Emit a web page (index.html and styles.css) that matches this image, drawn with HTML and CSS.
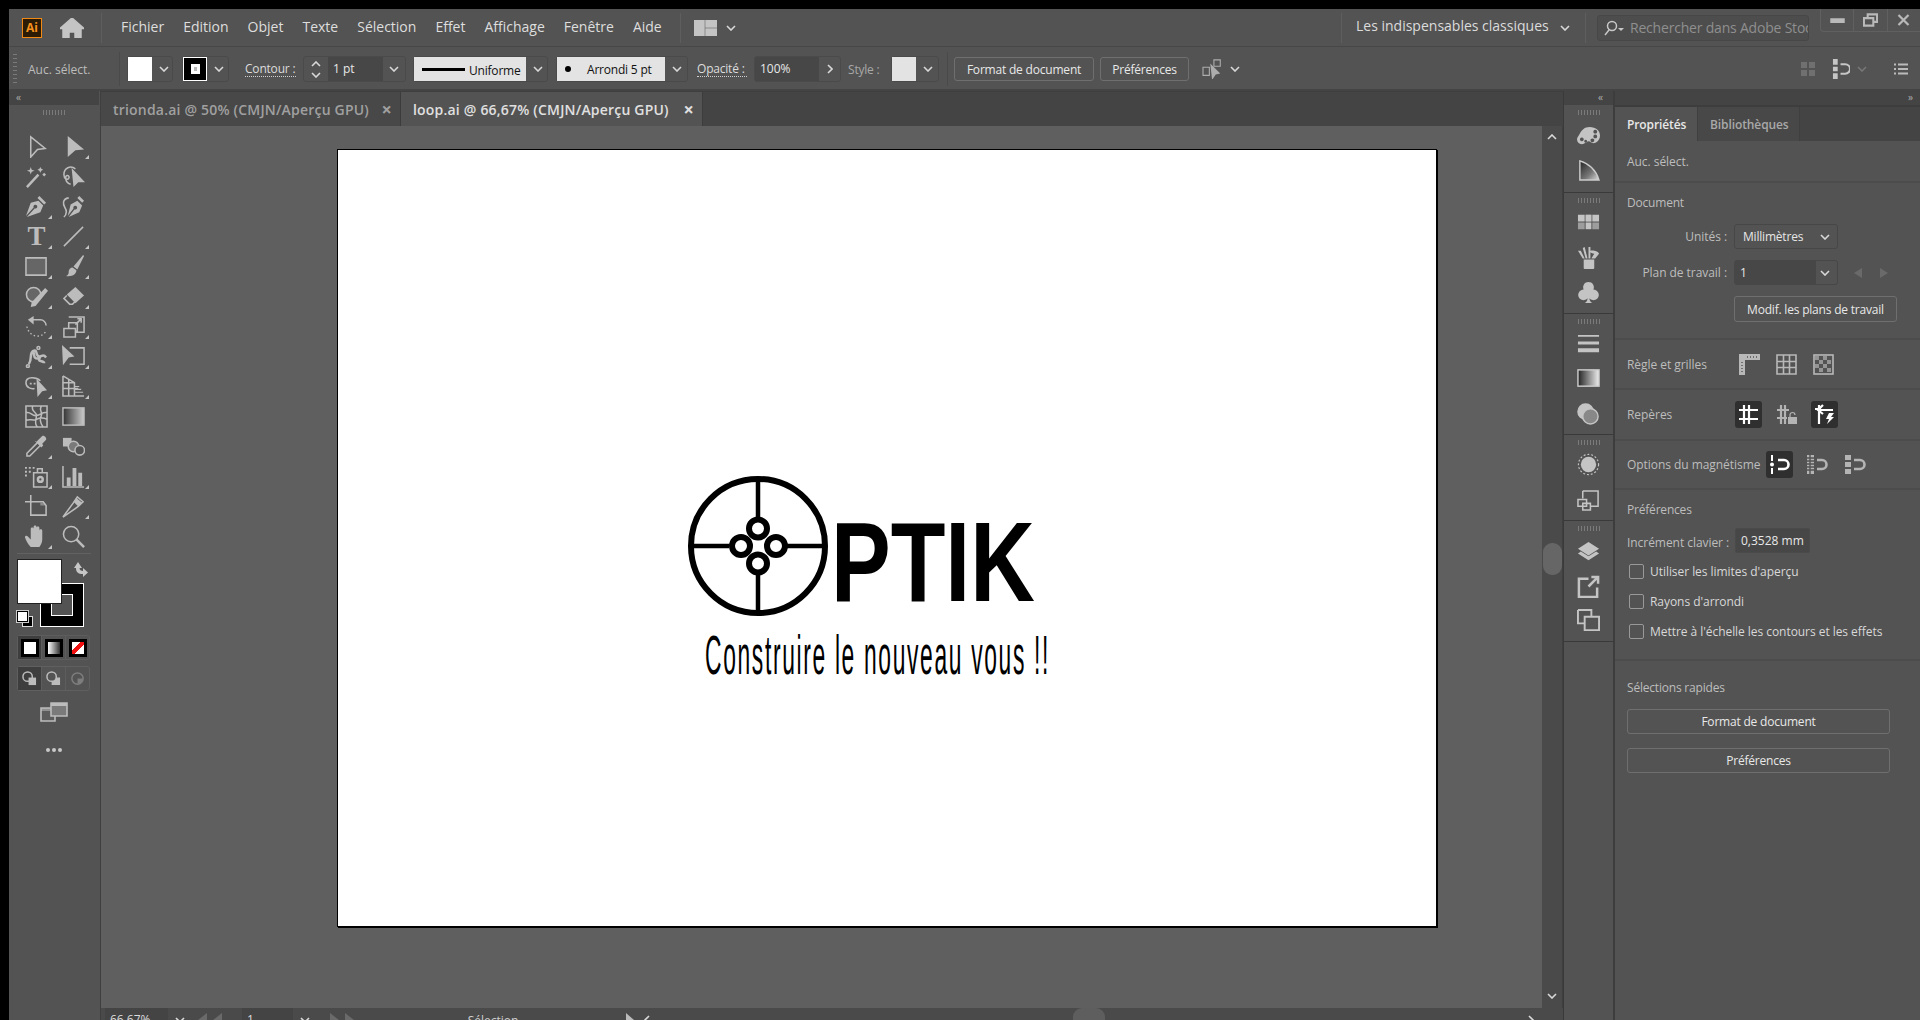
FILE: index.html
```html
<!DOCTYPE html>
<html lang="fr">
<head>
<meta charset="utf-8">
<title>Adobe Illustrator - loop.ai</title>
<link rel="stylesheet" href="styles.css">
</head>
<body>
<div class="app">
  <header class="menubar">
    <div class="ailogo">Ai</div>
    <svg class="home" viewBox="0 0 24 20"><path class="f" d="M12 0 24 10.5h-3V20h-6v-6H9v6H3v-9.500H0z"/></svg>
    <div class="vsep vs-home"></div>
    <nav class="menus"><span>Fichier</span><span>Edition</span><span>Objet</span><span>Texte</span><span>Sélection</span><span>Effet</span><span>Affichage</span><span>Fenêtre</span><span>Aide</span></nav>
    <div class="vsep"></div>
    <svg class="wsicon" viewBox="0 0 23 16"><path class="f" d="M0 0h10v16H0zM12 0h11v7H12zM12 9h11v7H12z"/></svg>
    <svg class="chev" viewBox="0 0 10 6"><path d="M1 1l4 4 4-4"/></svg>
    <div class="grow"></div>
    <div class="vsep"></div>
    <span class="wsname">Les indispensables classiques</span>
    <svg class="chev wschev" viewBox="0 0 10 6"><path d="M1 1l4 4 4-4"/></svg>
    <div class="vsep vs-search"></div>
    <div class="search">
      <svg viewBox="0 0 22 16"><circle cx="9" cy="6" r="4.500"/><path d="M6 10l-4 5"/><path class="f nostroke" d="M15 8h6l-3 3z"/></svg>
      <span>Rechercher dans Adobe Stoc</span>
    </div>
    <div class="winctl">
      <div><svg viewBox="0 0 14 12"><path class="f" d="M1 5h12v3H1z"/></svg></div>
      <div><svg viewBox="0 0 16 14"><path class="thick" d="M5 4V1h10v8h-4M1 5h10v8H1z"/></svg></div>
      <div><svg viewBox="0 0 14 14"><path class="thick" d="M2 2l10 10M12 2 2 12"/></svg></div>
    </div>
  </header>

  <div class="ctrlbar">
    <div class="grip"></div>
    <span class="lbl aucsel">Auc. sélect.</span>
    <div class="vsep vs-ctrl"></div>
    <div class="box swbox"><div class="swatch"></div><svg class="chev" viewBox="0 0 10 6"><path d="M1 1l4 4 4-4"/></svg></div>
    <div class="box swbox2"><div class="swatch strokesw"><i></i></div><svg class="chev" viewBox="0 0 10 6"><path d="M1 1l4 4 4-4"/></svg></div>
    <span class="lbl dotted contour">Contour :</span>
    <div class="box stepper">
      <div class="steps"><svg class="chev" viewBox="0 0 10 6"><path d="M1 5l4-4 4 4"/></svg><svg class="chev" viewBox="0 0 10 6"><path d="M1 1l4 4 4-4"/></svg></div>
      <div class="field fd-pt">1 pt</div>
      <svg class="chev" viewBox="0 0 10 6"><path d="M1 1l4 4 4-4"/></svg>
    </div>
    <div class="box profile"><div class="lightpart lp1"><i class="strokeline"></i><span>Uniforme</span></div><svg class="chev" viewBox="0 0 10 6"><path d="M1 1l4 4 4-4"/></svg></div>
    <div class="box brush"><div class="lightpart lp2"><i class="dot"></i><span>Arrondi 5 pt</span></div><svg class="chev" viewBox="0 0 10 6"><path d="M1 1l4 4 4-4"/></svg></div>
    <span class="lbl dotted opac">Opacité :</span>
    <div class="box opbox"><div class="field fd-op">100%</div><svg class="chevr" viewBox="0 0 6 10"><path d="M1 1l4 4-4 4"/></svg></div>
    <span class="lbl stylelbl">Style :</span>
    <div class="box stbox"><div class="swatch stsw"></div><svg class="chev" viewBox="0 0 10 6"><path d="M1 1l4 4 4-4"/></svg></div>
    <div class="vsep vs-st"></div>
    <button class="btn b-doc">Format de document</button>
    <button class="btn b-pref">Préférences</button>
    <svg class="isoicon" viewBox="0 0 24 22"><path class="thin" d="M1 9h7v9H1zM13 1h7v7h-7z"/><path class="f nostroke" d="M9 5l11 11-5 1-4 6z"/></svg>
    <svg class="chev isochev" viewBox="0 0 10 6"><path d="M1 1l4 4 4-4"/></svg>
    <div class="grow"></div>
    <svg class="ctl-r1" viewBox="0 0 16 16"><path class="f dim nostroke" d="M1 1h6v6H1zM9 1h6v6H9zM1 9h6v6H1zM9 9h6v6H9z"/></svg>
    <svg class="ctl-r2" viewBox="0 0 19 21"><path class="f nostroke" d="M1 0h5v6H1zM1 8h5v5H1zM1 15h5v6H1z"/><path class="thick" d="M9 5.500h5a5 5 0 0 1 0 10H9"/></svg>
    <svg class="chev dimchev" viewBox="0 0 10 6"><path d="M1 1l4 4 4-4"/></svg>
    <svg class="ctl-r3" viewBox="0 0 14 12"><path class="mid" d="M4 1.500h10M4 6h10M4 10.500h10M0 1.500h2M0 6h2M0 10.500h2"/></svg>
  </div>

  <div class="workspace">
    <aside class="tools">
      <div class="head"><span class="arrows">‹‹</span></div>
      <div class="gripx"></div>
      <div class="toolgrid">
        <div class="t"><svg viewBox="0 0 24 24"><path class="thin2" d="M6 2 21 14l-8 1-7 8z"/></svg></div>
        <div class="t m"><svg viewBox="0 0 24 24"><path class="f nostroke" d="M6 1 23 15l-9 1-8 7z"/></svg></div>
        <div class="t"><svg viewBox="0 0 24 24"><path class="wide" d="M2 23 14 10"/><path class="f nostroke" d="M6 2l1 3 3 1-3 1-1 3-1-3-3-1 3-1zM16 2l1 2 2 1-2 1-1 2-1-2-2-1 2-1zM20 8l1 1 1 1-1 1-1 1-1-1-1-1 1-1z"/></svg></div>
        <div class="t"><svg viewBox="0 0 24 24"><path class="thin2" d="M14 4C9 0 2 3 2 10c0 5 4 6 5 4 2-3-4-5-3 0 0 3 2 5 5 6"/><path class="f nostroke" d="M10 3 24 18l-7 0-5 5z"/></svg></div>
        <div class="t m"><svg viewBox="0 0 24 24"><path class="f nostroke" d="M14 6l5 5-3 7-14 5 8-9a2 2 0 1 0-1-1L1 22 6 8zM15 1l7 7-2 2-7-7z"/></svg></div>
        <div class="t"><svg viewBox="0 0 24 24"><path class="f nostroke" d="M16 6l5 5-3 7-11 5 6-8a2 2 0 1 0-1-1l-6 8 3-12zM18 1l5 5-2 2-5-5z"/><path class="thin2" d="M7 3C0 4 1 10 3 13s2 7-1 10"/></svg></div>
        <div class="t m"><span class="typ">T</span></div>
        <div class="t m"><svg viewBox="0 0 24 24"><path class="thin2" d="M2 22 22 2"/></svg></div>
        <div class="t m"><svg viewBox="0 0 24 24"><path class="rectic" d="M1 3h21v18H1z"/></svg></div>
        <div class="t m"><svg viewBox="0 0 24 24"><path class="f nostroke" d="M22 0l1 1-7 14-4-3zM11 13l4 3c0 4-4 7-11 6 3-1 3-3 3-5s2-4 4-4z"/></svg></div>
        <div class="t m"><svg viewBox="0 0 24 24"><circle class="cfill" cx="9" cy="10" r="7.500"/><path class="f nostroke" d="M21 3l3 3L11 22l-5 1 1-5z"/></svg></div>
        <div class="t m"><svg viewBox="0 0 24 24"><path class="f nostroke" d="M14 2l9 9-9 8-9-9z"/><path class="thin2" d="M5 11l-3 3 6 6 3 0 3-3"/></svg></div>
        <div class="t m"><svg viewBox="0 0 24 24"><path class="thin2" d="M8 5h8a6 6 0 0 1 6 6"/><path class="f nostroke" d="M9 1v9L3 5z"/><path class="dotc" d="M2 12c1 6 6 10 11 10s8-3 9-6"/></svg></div>
        <div class="t m"><svg viewBox="0 0 24 24"><path class="thin2" d="M7 2h16v16H14M2 14h12v9H2zM7 14V8h9v9h-2"/><path class="thin2" d="M14 10l6-6M16 4h4v4"/></svg></div>
        <div class="t m"><svg viewBox="0 0 24 24"><path class="wide" d="M4 20C8 14 4 8 9 6c4-2 2 6 6 6 3 0 4-3 7 1 M8 6c3 3-1 9 7 8-2 4 5 2 5 5"/><circle class="thin2" cx="3" cy="22" r="1.500"/><circle class="thin2" cx="14" cy="3" r="1.500"/></svg></div>
        <div class="t m"><svg viewBox="0 0 24 24"><path class="thin2 dashr" d="M8 3h15v17H8"/><path class="f nostroke" d="M0 0l13 12-6 1-6 8z"/></svg></div>
        <div class="t m"><svg viewBox="0 0 24 24"><path class="thin2" d="M16 6C12 2 1 1 1 8c0 5 5 7 9 6"/><path class="f nostroke" d="M12 4l11 12-5 1-5 6zM5 8h2v2H5zM9 8h2v2H9z"/></svg></div>
        <div class="t m"><svg viewBox="0 0 24 24"><path class="thin2" d="M1 1v21h22M1 1l12 7v14M1 8l12 0M1 14l16 0M7 4v18"/><path class="bars" d="M13 12h5M13 15h7M13 18h9"/></svg></div>
        <div class="t"><svg viewBox="0 0 24 24"><path class="thin2" d="M1 1h22v22H1zM1 8c6-1 6 4 11 3s6-4 11-3M8 1c-2 6 4 6 4 10s-3 8 1 12M17 1c-3 6 2 6 0 10s-1 8 2 12M1 16c5-2 7 1 11-1s7-2 11 0"/></svg></div>
        <div class="t"><svg class="gradic" viewBox="0 0 24 24"><defs><linearGradient id="g1"><stop offset="0" stop-color="#333"/><stop offset="1" stop-color="#ccc"/></linearGradient></defs><rect x="1" y="3" width="22" height="18" fill="url(#g1)" stroke="#bcbcbc" stroke-width="1.500"/></svg></div>
        <div class="t m"><svg viewBox="0 0 24 24"><path class="thin2" d="M13 8 2 19v3h3L16 11"/><path class="f nostroke" d="M12 7l2-2 4-4c2-1 5 2 4 4l-4 4 1 2-2 2-7-7z"/></svg></div>
        <div class="t"><svg viewBox="0 0 24 24"><path class="f nostroke" d="M1 3h9v9H1z"/><circle class="cdark" cx="12" cy="12" r="5.500"/><circle class="thin2 cbg" cx="18.500" cy="16" r="5"/></svg></div>
        <div class="t m"><svg viewBox="0 0 24 24"><path class="thin2" d="M9 8h14v15H9zM13 4h5v4h-5z"/><circle class="wide" cx="16" cy="15" r="2.500"/><path class="f nostroke" d="M0 2h2v2H0zM4 2h2v2H4zM8 2h2v2H8zM0 6h2v2H0zM4 6h2v2H4zM0 10h2v2H0z"/></svg></div>
        <div class="t m"><svg viewBox="0 0 24 24"><path class="thin2" d="M1 1v22h22"/><path class="f nostroke" d="M5 13h4v9H5zM11 3h4v19h-4zM17 8h4v14h-4z"/></svg></div>
        <div class="t"><svg viewBox="0 0 24 24"><path class="thin2" d="M6 7h13l3 4v10H6z"/><path class="f nostroke dim" d="M16 8h3l3 3h-6z"/><path class="thin2" d="M0 7h6V0"/></svg></div>
        <div class="t m"><svg viewBox="0 0 24 24"><path class="thin2" d="M1 23 12 8l4-6 6 5-5 5z"/><path class="f nostroke" d="M15 3l6 5-4 4-5-5z"/></svg></div>
        <div class="t m"><svg viewBox="0 0 24 24"><path class="f nostroke" d="M6 23C3 20 1 16 0 13c0-2 2-2 3-1l3 3V4c0-2 3-2 3 0v6V2c0-2 3-2 3 0v8V3c0-2 3-2 3 0v8V6c0-2 3-2 3 0v9c0 4-2 6-3 8z"/></svg></div>
        <div class="t"><svg viewBox="0 0 24 24"><circle class="thin2" cx="9.500" cy="9.500" r="8"/><path class="wide" d="M15 15l8 8"/></svg></div>
      </div>
      <div class="hline"></div>
      <div class="colors">
        <div class="strokebig"><i></i></div>
        <div class="fillbig"></div>
        <svg class="swap" viewBox="0 0 16 16"><path class="f nostroke" d="M1 7l4-6 4 6H6.500c0 2 1.500 3 3.500 3V7l5 4.500L10 16v-3C5 13 3 11 3 7z"/></svg>
        <div class="defaults"><i class="d-s"></i><i class="d-f"></i></div>
      </div>
      <div class="seg seg-color">
        <div class="on"><i class="m-fill"></i></div>
        <div><i class="m-grad"></i></div>
        <div><i class="m-none"></i></div>
      </div>
      <div class="seg seg-draw">
        <div class="on"><svg viewBox="0 0 16 16"><circle class="thin2" cx="6" cy="6" r="5"/><path class="f nostroke" d="M7 7h8v8H7z"/></svg></div>
        <div><svg viewBox="0 0 16 16"><circle class="thin2" cx="6" cy="6" r="5"/><path class="f nostroke" d="M11 7h4v8H6v-4a5 5 0 0 0 5-4z"/></svg></div>
        <div><svg class="faded" viewBox="0 0 16 16"><circle class="thin2" cx="8" cy="8" r="6"/><path class="f nostroke" d="M8 8h6a6 6 0 0 1-6 6z"/></svg></div>
      </div>
      <svg class="screenmode" viewBox="0 0 28 20"><path class="thin2 cfillm" d="M1 6h14v13H1z"/><path class="f dim nostroke" d="M1 6h14v3H1z"/><path class="thin2 cfillb" d="M11 1h16v13H11z"/><path class="f nostroke" d="M11 1h16v3H11z"/></svg>
      <div class="more3"><i></i><i></i><i></i></div>
    </aside>
    <div class="vbar"></div>

    <main class="main">
      <div class="tabs">
        <div class="tab">trionda.ai @ 50% (CMJN/Aperçu GPU)<b>×</b></div>
        <div class="tab active">loop.ai @ 66,67% (CMJN/Aperçu GPU)<b>×</b></div>
      </div>
      <div class="canvasrow">
        <div class="canvas">
          <div class="artboard">
            <svg class="mark" viewBox="0 0 140 142">
              <circle cx="70" cy="71" r="67" class="ring"/>
              <path class="ringline" d="M70 4v38M70 100v38M3 71h38M99 71h38"/>
              <circle cx="70" cy="53.500" r="9" class="ringsm"/>
              <circle cx="53" cy="71" r="9" class="ringsm"/>
              <circle cx="88" cy="71" r="9" class="ringsm"/>
              <circle cx="70" cy="88.500" r="9" class="ringsm"/>
            </svg>
            <div class="ptik">PTIK</div>
            <div class="slogan">Construire le nouveau vous !!</div>
          </div>
        </div>
        <div class="vscroll">
          <svg class="chev up" viewBox="0 0 10 6"><path d="M1 5l4-4 4 4"/></svg>
          <div class="thumb"></div>
          <svg class="chev down" viewBox="0 0 10 6"><path d="M1 1l4 4 4-4"/></svg>
        </div>
      </div>
      <div class="status">
        <div class="st-field st-zoom">66,67%</div><div class="st-ch"><svg class="chev" viewBox="0 0 10 6"><path d="M1 1l4 4 4-4"/></svg></div>
        <div class="st-nav"><i></i><i></i></div>
        <div class="st-field st-num">1</div><div class="st-ch"><svg class="chev" viewBox="0 0 10 6"><path d="M1 1l4 4 4-4"/></svg></div>
        <div class="st-nav st-nav2"><i></i><i></i></div>
        <div class="st-sel">Sélection</div>
        <div class="st-play"></div>
        <svg class="chevr st-left" viewBox="0 0 6 10"><path d="M5 1 1 5l4 4"/></svg>
        <div class="hthumb"></div>
        <svg class="chevr st-right" viewBox="0 0 6 10"><path d="M1 1l4 4-4 4"/></svg>
      </div>
    </main>

    <aside class="dock">
      <div class="head"><span class="arrows arr-r">‹‹</span></div>
      <div class="dgroup g1">
        <div class="gripx"></div>
        <svg viewBox="0 0 24 24"><path class="f nostroke" fill-rule="evenodd" d="M13 3c7 0 11 4 11 9s-4 8-7 8c-2 0-3-2-5-2s-4 3-7 3-5-2-5-5c0-2 2-4 3-6 2-4 5-7 10-7zM5 14a2 2 0 1 0 .1 0zM9 16.500a1.500 1.500 0 1 0 .1 0zM16 15a2 2 0 1 0 .1 0zM19 11a2 2 0 1 0 .1 0zM19 6a2 2 0 1 0 .1 0z"/></svg>
        <svg viewBox="0 0 24 24"><defs><linearGradient id="g2" x2="1" y2="1"><stop offset="0" stop-color="#222"/><stop offset=".6" stop-color="#777"/><stop offset="1" stop-color="#ddd"/></linearGradient></defs><path d="M3 2C13 5 20 12 23 22H3z" fill="url(#g2)" stroke="#ccc" stroke-width="1.500"/></svg>
      </div>
      <div class="dgroup g2">
        <div class="gripx"></div>
        <svg viewBox="0 0 24 24"><path class="f nostroke" d="M1 4h7v7H1zM9 4h6v7H9zM16 4h7v7h-7z"/><path class="f nostroke dim2" d="M9 4h6v7H9zM1 12h7v7H1zM16 12h7v7h-7z"/><path class="f nostroke" d="M9 12h6v7H9z"/></svg>
        <svg viewBox="0 0 24 24"><path class="f nostroke" d="M7 14h11v9a1 1 0 0 1-1 1H8a1 1 0 0 1-1-1zM9 13 6 2l2-1 3 12zM12 13V1h2v12zM15 13l3-5c-2 0-5-1-4-3 2-1 8 0 9 3l-4 5z"/><path class="f nostroke" d="M1 5l3 0 4 8H6z"/></svg>
        <svg viewBox="0 0 24 24"><path class="f nostroke" d="M12 1a5.500 5.500 0 0 1 5 8 5.500 5.500 0 1 1-4 9c0 2 1 4 3 5H8c2-1 3-3 3-5a5.500 5.500 0 1 1-4-9 5.500 5.500 0 0 1 5-8z"/></svg>
      </div>
      <div class="dgroup g3">
        <div class="gripx"></div>
        <svg viewBox="0 0 24 24"><path class="f nostroke" d="M1 3h22v2H1zM1 10h22v3H1zM1 17h22v4H1z"/></svg>
        <svg viewBox="0 0 24 24"><defs><linearGradient id="g3"><stop offset="0" stop-color="#222"/><stop offset="1" stop-color="#eee"/></linearGradient></defs><rect x="1" y="3" width="22" height="17" fill="url(#g3)" stroke="#ccc" stroke-width="1.500"/></svg>
        <svg viewBox="0 0 24 24"><circle cx="9" cy="9" r="8" fill="#c4c4c4"/><circle cx="14" cy="14" r="8" fill="#888" stroke="#c4c4c4" stroke-width="1.500"/></svg>
      </div>
      <div class="dgroup g4">
        <div class="gripx"></div>
        <svg viewBox="0 0 24 24"><circle class="f nostroke" cx="12" cy="12" r="8"/><circle class="dashc" cx="12" cy="12" r="10.500"/></svg>
        <svg viewBox="0 0 24 24"><path class="thin2" d="M6 2h16v16H14M6 2v8"/><path class="thin2" d="M1 11h9v7H1zM6 15h8v7H6z"/></svg>
      </div>
      <div class="dgroup g5">
        <div class="gripx"></div>
        <svg viewBox="0 0 24 24"><path class="f nostroke" d="M12 1l11 7-11 7L1 8zM1 13l3-2 8 5 8-5 3 2-11 7z"/></svg>
        <svg viewBox="0 0 24 24"><path class="wide" d="M12 4H2v19h19V13M12 12 22 2M15 2h7v7"/></svg>
        <svg viewBox="0 0 24 24"><path class="thin2 wider" d="M1 1h14v7M1 1v14h7M8 8h15v14H8z"/></svg>
      </div>
    </aside>
    <div class="vbar2"></div>

    <aside class="props">
      <div class="head phead"><span class="arrows arr-rr">››</span></div>
      <div class="ptabs"><div class="ptab on">Propriétés</div><div class="ptab">Bibliothèques</div></div>
      <section class="sec s-sel"><span class="ltxt">Auc. sélect.</span></section>
      <section class="sec s-doc">
        <div class="ttl">Document</div>
        <div class="frow r1"><label>Unités :</label><div class="sel">Millimètres<svg class="chev" viewBox="0 0 10 6"><path d="M1 1l4 4 4-4"/></svg></div></div>
        <div class="frow r2"><label>Plan de travail :</label><div class="sel combo"><div class="cb-in">1</div><svg class="chev" viewBox="0 0 10 6"><path d="M1 1l4 4 4-4"/></svg></div>
          <svg class="tri" viewBox="0 0 8 10"><path class="f nostroke" d="M8 0v10L0 5z"/></svg><svg class="tri tr2" viewBox="0 0 8 10"><path class="f nostroke" d="M0 0v10l8-5z"/></svg></div>
        <button class="btn b-modif">Modif. les plans de travail</button>
      </section>
      <section class="sec s-rule rowsec">
        <span class="ltxt w-rule">Règle et grilles</span>
        <svg class="pi" viewBox="0 0 21 21"><path class="f nostroke" d="M0 0h21v6H6v15H0z"/><path class="dk" d="M8 3h1M11 3h1M14 3h1M17 3h1M3 8v1M3 11v1M3 14v1M3 17v1"/></svg>
        <svg class="pi" viewBox="0 0 21 21"><path class="thin2" d="M1 1h19v19H1zM7.500 1v19M13.500 1v19M1 7.500h19M1 13.500h19"/></svg>
        <svg class="pi" viewBox="0 0 21 21"><rect x="1" y="1" width="19" height="19" class="thin2"/><path class="f dim2 nostroke" d="M2 2h4v4H2zM10 2h4v4h-4zM6 6h4v4H6zM14 6h4v4h-4zM2 10h4v4H2zM10 10h4v4h-4zM6 14h4v4H6zM14 14h4v4h-4z"/></svg>
      </section>
      <section class="sec s-guides rowsec">
        <span class="ltxt w-guides">Repères</span>
        <div class="ib on"><svg viewBox="0 0 21 21"><path class="thick w" d="M6 1v19M11 1v19M1 6h19M1 15h19"/></svg></div>
        <div class="ib"><svg viewBox="0 0 21 21"><path class="thick" d="M5 1v19M9 1v19M1 6h12M1 14h10"/><path class="f nostroke" d="M12 13h9v7h-9z"/><path class="thin" d="M14 13v-2a2.500 2.500 0 0 1 5 0"/></svg></div>
        <div class="ib on"><svg viewBox="0 0 21 21"><path class="thick w" d="M5 1v19M1 5h6M9 1 4 6l5 4M5 6h14"/><path class="f w nostroke" d="M15 9h5l-3 4h3l-7 7 2-5h-3z"/></svg></div>
      </section>
      <section class="sec s-snap rowsec">
        <span class="ltxt w-snap">Options du magnétisme</span>
        <div class="ib on"><svg viewBox="0 0 21 21"><path class="mid w" d="M3 1v6M3 14v6"/><circle class="f w nostroke" cx="3" cy="10.500" r="2"/><path class="wide w" d="M9 6h6a4.500 4.500 0 0 1 0 9H9"/></svg></div>
        <div class="ib"><svg viewBox="0 0 21 21"><path class="f nostroke" d="M0 1h7v19H0z"/><path class="dk" d="M0 4h7M0 7h7M0 10h7M0 13h7M0 16h7M3 1v19"/><path class="wide" d="M10 6h5a4.500 4.500 0 0 1 0 9h-5"/></svg></div>
        <div class="ib"><svg viewBox="0 0 21 21"><path class="f nostroke" d="M0 1h6v5H0zM0 8h6v5H0zM0 15h6v5H0z"/><path class="wide" d="M9 6h6a4.500 4.500 0 0 1 0 9H9"/></svg></div>
      </section>
      <section class="sec s-pref">
        <div class="ttl">Préférences</div>
        <div class="incr"><span class="ltxt">Incrément clavier :</span><div class="incfield">0,3528 mm</div></div>
        <div class="chk"><i></i>Utiliser les limites d'aperçu</div>
        <div class="chk"><i></i>Rayons d'arrondi</div>
        <div class="chk"><i></i>Mettre à l'échelle les contours et les effets</div>
      </section>
      <section class="sec s-quick">
        <div class="ttl">Sélections rapides</div>
        <button class="btn qb qb1">Format de document</button>
        <button class="btn qb">Préférences</button>
      </section>
    </aside>
  </div>
</div>
</body>
</html>
```

FILE: styles.css
```css
* { box-sizing: border-box; }
html, body { margin: 0; height: 1020px; overflow: hidden; background: #000; }
body { padding: 9px 0 0 9px; font-family: "Open Sans", "Noto Sans", sans-serif; font-size: 12px; color: #e4e4e4; }
svg { display: block; fill: none; stroke: currentColor; stroke-width: 1.5; flex: none; }
.f { fill: currentColor; }
.nostroke { stroke: none; }
.dim { opacity: .55; }
.dim2 { opacity: .65; }
.thin { stroke-width: 1.2; }
.thin2 { stroke-width: 1.6; }
.mid { stroke-width: 2; }
.thick { stroke-width: 2.2; }
.wide { stroke-width: 2.6; }
.w { color: #fff; }
.dk { stroke: #535353; stroke-width: 1.4; }
.dashc { stroke-width: 1.2; stroke-dasharray: 2 2; }
.wider { stroke-width: 2; }
.app { width: 1911px; height: 1011px; display: flex; flex-direction: column; background: #535353; }
.grow { flex: 1; }

/* menu bar */
.menubar { height: 38px; flex: none; display: flex; align-items: center; color: #bdbdbd; border-bottom: 1px solid #474747; }
.ailogo { width: 20px; height: 20px; margin-left: 13px; background: #2c1c06; border: 1px solid #f08a14; color: #f6921e; font: 700 12px/18px "Open Sans", sans-serif; text-align: center; }
.home { width: 24px; height: 20px; margin-left: 18px; color: #c4c4c4; }
.vsep { width: 1px; height: 30px; background: #5e5e5e; flex: none; }
.vs-home { margin-left: 17px; }
.menus { display: flex; margin-left: 19px; width: 559px; font-size: 14px; line-height: 18px; margin-top: -2px; color: #dedede; gap: 19px; }
.wsicon { width: 23px; height: 16px; margin-left: 13px; color: #c4c4c4; }
.chev { width: 10px; height: 6px; color: #d8d8d8; stroke-width: 1.6; }
.menubar > .chev { margin-left: 9px; }
.wsname { font-size: 14px; line-height: 18px; margin-top: -3px; color: #dcdcdc; margin-left: 14px; width: 195px; white-space: nowrap; }
.menubar > .wschev { margin-left: 9px; }
.vs-search { margin-left: 15px; }
.search { width: 212px; height: 26px; margin-left: 11px; border: 1px solid #474747; border-radius: 3px; background: #4d4d4d; display: flex; align-items: center; padding-left: 5px; overflow: hidden; white-space: nowrap; font-size: 14px; color: #8f8f8f; letter-spacing: -.2px; }
.search svg { width: 22px; height: 16px; color: #c8c8c8; margin-right: 5px; }
.winctl { width: 100px; height: 23px; margin: 0 0 0 11px; display: flex; border: 1px solid #606060; border-width: 0 0 1px 1px; border-bottom-left-radius: 4px; align-self: flex-start; color: #b9b9b9; }
.winctl div { flex: 1; display: flex; align-items: center; justify-content: center; border-left: 1px solid #606060; }
.winctl div:first-child { border-left: 0; }
.winctl svg { width: 15px; height: 14px; }

/* control bar */
.ctrlbar { height: 44px; flex: none; display: flex; align-items: center; border-bottom: 2px solid #444; padding-top: 2px; color: #d0d0d0; }
.grip { width: 4px; height: 30px; margin-left: 4px; background: repeating-linear-gradient(#7a7a7a 0 1px, transparent 1px 4px); }
.lbl { font-size: 12px; color: #bcbcbc; white-space: nowrap; }
.aucsel { margin-left: 11px; width: 91px; }
.vs-ctrl { height: 34px; background: #4a4a4a; margin-left: 0; }
.box { height: 26px; border: 1px solid #4a4a4a; border-radius: 3px; display: flex; align-items: center; flex: none; }
.swatch { width: 24px; height: 24px; background: #fff; flex: none; }
.stsw { background: #e3e3e3; }
.swbox { margin-left: 7px; width: 46px; }
.swbox2 { margin-left: 9px; width: 47px; }
.box .chev { margin-left: 7px; }
.strokesw { background: #000; border: 1px solid #fff; display: flex; align-items: center; justify-content: center; }
.strokesw i { width: 9px; height: 10px; background: #bbb; border: 1px solid #fff; box-shadow: inset 0 0 0 2px #fff; }
.dotted { border-bottom: 1px dotted #d0d0d0; color: #dcdcdc; line-height: 15px; }
.contour { margin-left: 16px; width: 51px; letter-spacing: -.2px; }
.stepper { width: 103px; margin-left: 7px; }
.steps { width: 24px; display: flex; flex-direction: column; align-items: center; gap: 5px; }
.steps .chev { margin: 0; }
.field { background: #474747; height: 24px; line-height: 24px; padding-left: 5px; color: #e8e8e8; flex: none; font-size: 12px; }
.fd-pt { width: 55px; }
.stepper > .chev { margin-left: 6px; }
.profile { width: 135px; margin-left: 7px; }
.lightpart { background: #e3e3e3; height: 24px; color: #111; display: flex; align-items: center; flex: none; white-space: nowrap; letter-spacing: -.2px; }
.lp1 { width: 112px; padding: 3px 0 0 8px; }
.strokeline { width: 43px; height: 3px; background: #000; margin: -3px 4px 0 0; }
.lp2 { width: 108px; padding-left: 8px; }
.dot { width: 6px; height: 6px; background: #000; border-radius: 50%; margin-right: 16px; }
.brush { width: 132px; margin-left: 8px; }
.opac { margin-left: 9px; width: 50px; letter-spacing: -.2px; }
.opbox { width: 87px; margin-left: 7px; }
.fd-op { width: 64px; }
.chevr { width: 6px; height: 10px; color: #d8d8d8; stroke-width: 1.6; }
.box .chevr { margin-left: 8px; }
.stylelbl { margin-left: 7px; width: 43px; color: #a8a8a8; letter-spacing: -.2px; }
.stbox { width: 48px; }
.vs-st { margin-left: 8px; height: 34px; background: #4a4a4a; }
.btn { font: 12px "Open Sans", sans-serif; letter-spacing: -.2px; color: #e8e8e8; background: transparent; border: 1px solid #6f6f6f; border-radius: 3px; height: 24px; padding: 0; white-space: nowrap; flex: none; }
.b-doc { width: 140px; margin-left: 6px; }
.b-pref { width: 89px; margin-left: 6px; }
.isoicon { width: 22px; height: 20px; margin-left: 13px; color: #adadad; }
.ctrlbar > .isochev { margin-left: 6px; }
.ctl-r1 { width: 16px; height: 16px; color: #888; }
.ctl-r2 { width: 18px; height: 20px; margin-left: 16px; color: #c6c6c6; }
.ctrlbar > .dimchev { margin-left: 7px; color: #777; }
.ctl-r3 { width: 14px; height: 12px; margin: 0 12px 0 27px; color: #bbb; }

/* workspace */
.workspace { flex: 1; min-height: 0; display: flex; }
.head { height: 14px; background: #444; color: #b0b0b0; font-size: 10px; line-height: 12px; padding-left: 7px; flex: none; }
.arrows { letter-spacing: -1px; }
.gripx { width: 22px; height: 5px; margin: 0 auto; background: repeating-linear-gradient(90deg, #7b7b7b 0 1px, transparent 1px 3px); }

/* tools */
.tools { width: 90px; flex: none; display: flex; flex-direction: column; color: #bcbcbc; position: relative; }
.tools > .gripx { margin-top: 5px; }
.toolgrid { margin-top: 16px; padding-left: 9px; display: grid; grid-template-columns: 37px 37px; grid-auto-rows: 30px; }
.t { position: relative; display: flex; align-items: center; justify-content: center; }
.t svg { width: 23px; height: 23px; }
.t.m::after { content: ""; position: absolute; right: 3px; bottom: 2px; border: 2.5px solid transparent; border-right-color: #c4c4c4; border-bottom-color: #c4c4c4; }
.typ { font: 700 27px/30px "Liberation Serif", serif; color: #bcbcbc; }
.rectic { fill: #666; stroke-width: 1.6; }
.cfill { fill: #666; stroke-width: 1.6; }
.dotc { stroke-dasharray: 1.5 2.5; stroke-width: 1.4; }
.bars { stroke-width: 1.2; }
.cdark { fill: #7a7a7a; stroke: #bcbcbc; stroke-width: 1.6; }
.cbg { fill: #535353; }
.hline { height: 1px; background: #626262; margin: 2px 8px 0; flex: none; }
.colors { position: relative; height: 81px; flex: none; }
.fillbig { position: absolute; left: 8px; top: 5px; width: 45px; height: 45px; background: #fff; border: 1px solid #222; }
.strokebig { position: absolute; left: 31px; top: 29px; width: 44px; height: 44px; background: #000; border: 1px solid #fff; padding: 10px; }
.strokebig i { display: block; width: 22px; height: 22px; background: #535353; border: 1px solid #fff; }
.swap { position: absolute; left: 64px; top: 7px; width: 16px; height: 16px; color: #c6c6c6; }
.defaults { position: absolute; left: 8px; top: 57px; width: 16px; height: 16px; }
.defaults i { position: absolute; display: block; width: 11px; height: 11px; border: 1px solid #ddd; }
.d-s { right: 0; bottom: 0; background: #000; }
.d-f { left: 0; top: 0; background: #fff; border-color: #000 !important; outline: 1px solid #ccc; }
.seg { margin-left: 8px; width: 73px; height: 25px; flex: none; display: flex; border: 1px solid #606060; border-radius: 3px; }
.seg div { flex: 1; display: flex; align-items: center; justify-content: center; border-left: 1px solid #5d5d5d; }
.seg div:first-child { border-left: 0; }
.seg .on { background: #3e3e3e; }
.seg-color { border-color: #5d5d5d; }
.seg i { display: block; width: 18px; height: 18px; border: 3px solid #000; }
.m-fill { background: #fff; }
.m-grad { background: linear-gradient(90deg, #fff, #333); }
.m-none { background: linear-gradient(135deg, #fff 0 36%, #f01010 36% 62%, #fff 62%); }
.seg-draw { margin-top: 6px; }
.seg-draw svg { width: 15px; height: 15px; }
.faded { opacity: .4; }
.screenmode { width: 28px; height: 20px; margin: 11px 0 0 31px; color: #bcbcbc; }
.cfillm { fill: #5c5c5c; }
.cfillb { fill: #7a7a7a; }
.more3 { display: flex; gap: 2px; justify-content: center; margin: 26px 0 0; }
.more3 i { width: 4px; height: 4px; border-radius: 50%; background: #c8c8c8; }
.vbar { width: 2px; flex: none; background: linear-gradient(90deg, #535353 0 1px, #3f3f3f 1px); }

/* main */
.main { width: 1462px; flex: none; display: grid; grid-template-rows: 35px 882px 24px; background: #444; }
.tabs { display: flex; background: #444; border-top: 1px solid #3e3e3e; }
.tab { width: 300px; padding-left: 12px; display: flex; align-items: center; font-size: 14px; font-weight: 600; color: #a0a0a0; background: #484848; border-right: 1px solid #3c3c3c; white-space: nowrap; letter-spacing: .2px; }
.tab.active { background: #535353; color: #e0e0e0; width: 302px; }
.tab b { margin-left: auto; margin-right: 8px; font-size: 18px; font-weight: 700; line-height: 16px; }
.canvasrow { display: flex; min-height: 0; }
.canvas { flex: 1; background: #5f5f5f; padding: 23px 0 0 236px; overflow: hidden; }
.artboard { position: relative; width: 1100px; height: 778px; background: #fff; border: 1px solid #000; box-shadow: 1px 1px 0 #000; }
.mark { position: absolute; left: 350px; top: 325px; width: 140px; height: 142px; }
.ring { stroke: #000; stroke-width: 6; fill: none; }
.ringline { stroke: #000; stroke-width: 4.500; }
.ringsm { stroke: #000; stroke-width: 6; fill: #fff; }
.ptik { position: absolute; left: 493px; top: 347px; font: 700 114px/130px "Liberation Sans", sans-serif; color: #000; transform: scaleX(.785); transform-origin: left top; }
.slogan { position: absolute; left: 367px; top: 475px; font: 400 55px/60px "Liberation Sans", sans-serif; letter-spacing: 4px; color: #000; white-space: nowrap; transform: scaleX(.415); transform-origin: left top; }
.vscroll { width: 21px; flex: none; background: #4a4a4a; display: flex; flex-direction: column; align-items: center; border-right: 1px solid #3f3f3f; padding: 8px 0 9px; }
.thumb { width: 19px; height: 32px; border-radius: 9px; background: #666; margin-top: 403px; }
.vscroll .down { margin-top: auto; }
.status { display: flex; align-items: center; background: #4a4a4a; font-size: 12px; padding-left: 4px; position: relative; color: #dcdcdc; }
.st-field { height: 24px; line-height: 24px; background: #444; padding-left: 5px; flex: none; }
.st-zoom { width: 63px; }
.st-num { width: 51px; margin-left: 8px; }
.st-ch { width: 23px; display: flex; justify-content: center; flex: none; }
.st-nav { width: 43px; flex: none; display: flex; gap: 6px; padding-left: 7px; }
.st-nav i { width: 0; height: 0; border: 7px solid transparent; border-left: 0; border-right: 9px solid #6a6a6a; }
.st-nav2 { width: 52px; padding-left: 14px; }
.st-nav2 i { border-right: 0; border-left: 9px solid #6a6a6a; }
.st-sel { width: 250px; text-align: center; color: #cfcfcf; }
.st-play { width: 0; height: 0; border: 7px solid transparent; border-right: 0; border-left: 8px solid #bbb; margin-left: 8px; }
.st-left { margin-left: 10px; }
.hthumb { position: absolute; left: 972px; top: 0; width: 32px; height: 24px; border-radius: 9px 9px 0 0; background: #5e5e5e; }
.st-right { position: absolute; left: 1427px; top: 7px; }

/* dock */
.dock { width: 50px; flex: none; color: #c4c4c4; display: flex; flex-direction: column; border-left: 1px solid #3a3a3a; }
.dgroup { display: flex; flex-direction: column; align-items: center; border-top: 1px solid #3a3a3a; flex: none; padding-top: 5px; }
.dgroup svg { width: 23px; height: 23px; }
.arr-r { margin-left: 27px; }
.g1 { height: 87px; border-top: 0; }
.g1 svg:nth-of-type(1) { margin-top: 9px; }
.g1 svg:nth-of-type(2) { margin-top: 12px; }
.g2 { height: 121px; }
.g2 svg:nth-of-type(1) { margin-top: 8px; }
.g2 svg:nth-of-type(2) { margin-top: 12px; }
.g2 svg:nth-of-type(3) { margin-top: 12px; }
.g3 { height: 121px; }
.g3 svg:nth-of-type(1) { margin-top: 8px; }
.g3 svg:nth-of-type(2) { margin-top: 12px; }
.g3 svg:nth-of-type(3) { margin-top: 13px; }
.g4 { height: 86px; }
.g4 svg:nth-of-type(1) { margin-top: 8px; }
.g4 svg:nth-of-type(2) { margin-top: 13px; }
.g5 { height: 122px; border-bottom: 1px solid #3a3a3a; }
.g5 svg:nth-of-type(1) { margin-top: 10px; }
.g5 svg:nth-of-type(2) { margin-top: 11px; }
.g5 svg:nth-of-type(3) { margin-top: 11px; }
.vbar2 { width: 2px; flex: none; background: #3d3d3d; }

/* properties */
.props { flex: 1; min-width: 0; display: flex; flex-direction: column; }
.phead { border-bottom: 2px solid #3d3d3d; height: 16px; }
.arr-rr { margin-left: 286px; }
.ptabs { display: flex; height: 34px; flex: none; background: #444; font-size: 12px; font-weight: 600; letter-spacing: -.1px; }
.ptab { padding: 0 12px; width: 102px; display: flex; align-items: center; background: #484848; color: #a8a8a8; border-right: 1px solid #3f3f3f; }
.ptab.on { background: #535353; width: 83px; color: #e8e8e8; }
.sec { border-bottom: 2px solid #4c4c4c; padding: 0 12px; flex: none; }
.ltxt, .frow label { font-size: 12px; color: #bdbdbd; letter-spacing: -.05px; white-space: nowrap; }
.ttl { font-size: 12px; color: #bdbdbd; letter-spacing: -.2px; white-space: nowrap; line-height: 16px; }
.s-sel { height: 42px; display: flex; align-items: center; }
.s-doc { height: 157px; padding-top: 12px; }
.frow { display: flex; align-items: center; height: 25px; }
.r1 { margin-top: 13px; }
.r2 { margin-top: 11px; }
.frow label { width: 100px; text-align: right; margin-right: 7px; }
.sel { width: 104px; height: 25px; border: 1px solid #474747; border-radius: 3px; display: flex; align-items: center; padding-left: 8px; color: #e6e6e6; letter-spacing: -.2px; }
.sel .chev { margin-left: auto; margin-right: 7px; }
.combo { padding-left: 0; }
.cb-in { width: 81px; height: 23px; line-height: 23px; background: #474747; padding-left: 5px; }
.tri { width: 8px; height: 10px; color: #6a6a6a; margin-left: 16px; }
.tr2 { margin-left: 18px; }
.b-modif { display: block; width: 163px; height: 26px; margin: 11px 0 0 107px; }
.rowsec { display: flex; align-items: center; }
.s-rule { height: 50px; }
.w-rule { width: 112px; }
.pi { width: 21px; height: 21px; margin-right: 16px; color: #b8b8b8; }
.s-guides { height: 51px; }
.w-guides { width: 108px; }
.ib { width: 27px; height: 27px; margin-right: 11px; border-radius: 3px; display: flex; align-items: center; justify-content: center; color: #b4b4b4; flex: none; }
.ib.on { background: #2f2f2f; color: #fff; }
.ib svg { width: 21px; height: 21px; }
.s-snap { height: 49px; }
.w-snap { width: 139px; }
.s-pref { height: 171px; padding-top: 12px; }
.incr { display: flex; align-items: center; height: 25px; margin-top: 10px; }
.incr .ltxt { width: 108px; flex: none; padding-top: 3px; }
.incfield { width: 75px; height: 25px; line-height: 23px; border: 1px solid #4a4a4a; background: #474747; border-radius: 2px; padding-left: 5px; color: #e8e8e8; white-space: nowrap; }
.chk { display: flex; align-items: center; height: 30px; color: #d8d8d8; letter-spacing: -.05px; white-space: nowrap; }
.incr + .chk { margin-top: 3px; }
.chk i { width: 15px; height: 15px; border: 1px solid #999; border-radius: 2px; margin: 0 6px 0 2px; flex: none; }
.s-quick { border-bottom: 0; padding-top: 19px; flex: 1; }
.qb { display: block; width: 263px; height: 25px; margin-top: 14px; }
.qb1 { margin-top: 13px; }
```
